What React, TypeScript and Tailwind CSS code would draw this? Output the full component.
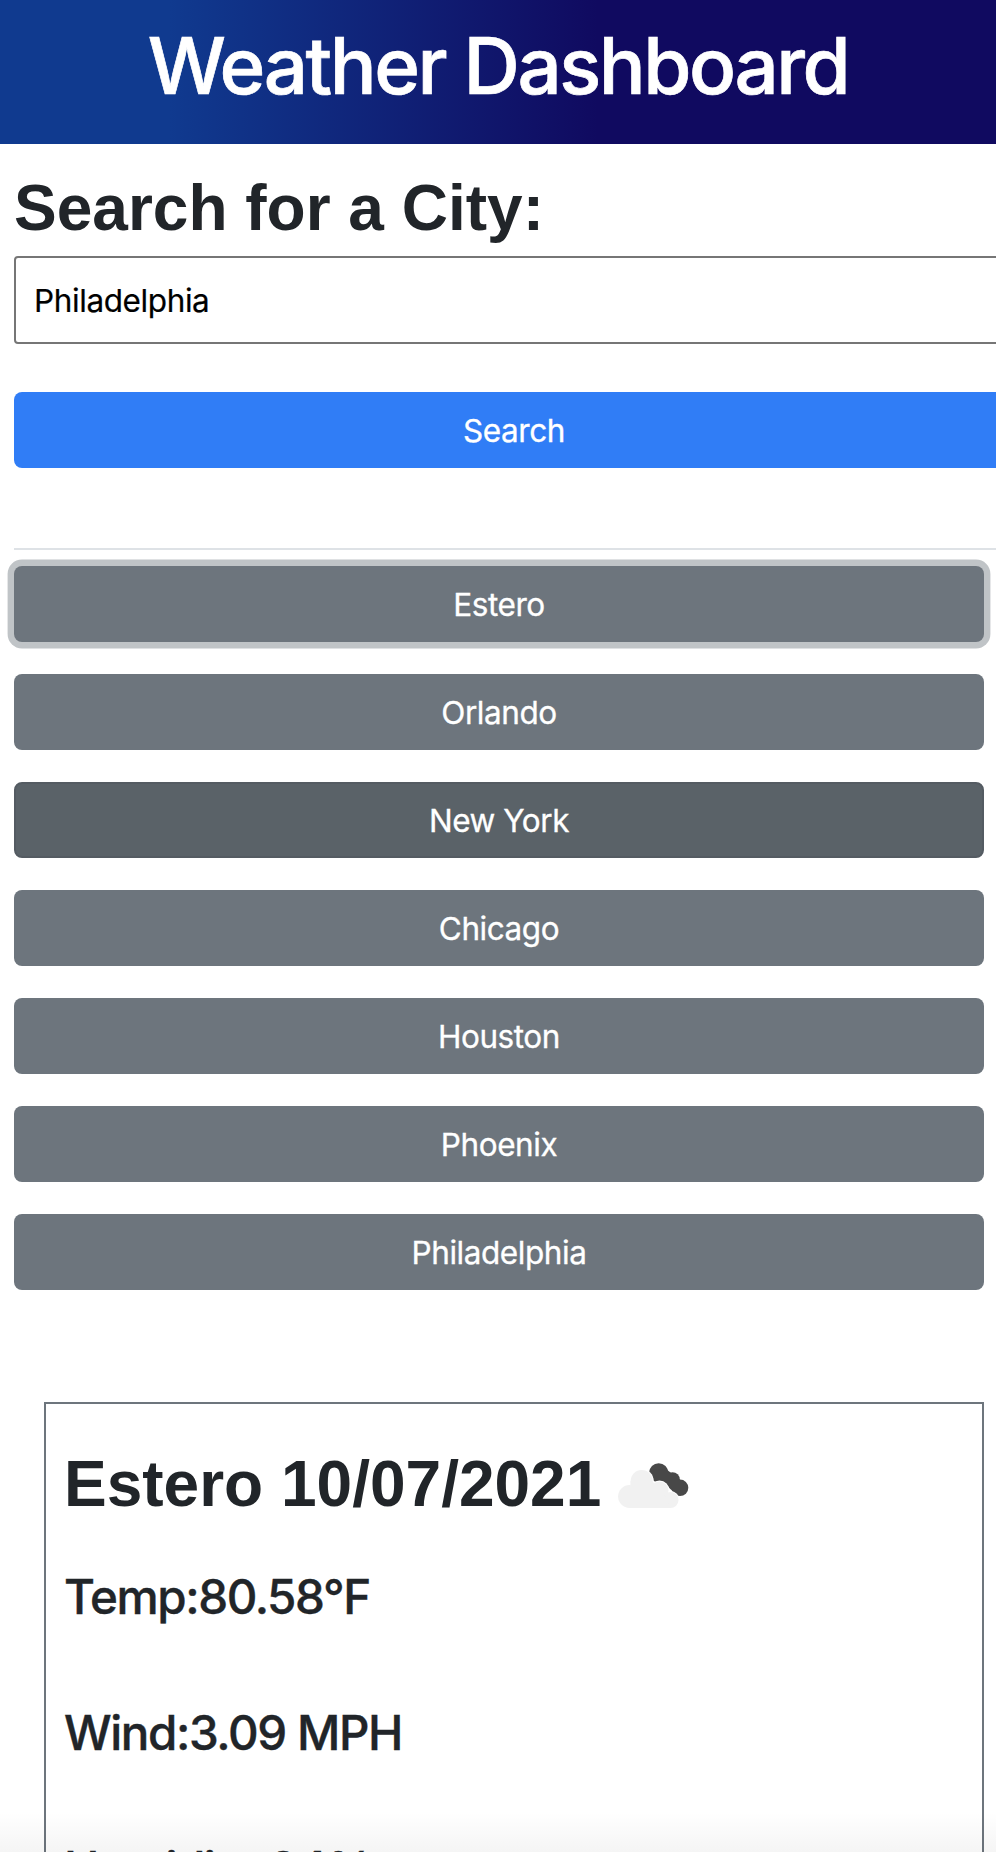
import React from "react";

const cities = ["Estero", "Orlando", "New York", "Chicago", "Houston", "Phoenix", "Philadelphia"];

const readings = ["Temp:80.58°F", "Wind:3.09 MPH", "Humidity:84%"];

function cityClass(city: string) {
  if (city === "Estero") return "bg-[#6d757d] ring-[6.4px] ring-[#c0c4c7]";
  if (city === "New York") return "border-2 border-[#545b62] bg-[#5a6268]";
  return "bg-[#6d757d]";
}

function BrokenClouds() {
  return (
    <svg className="mt-[59px] ml-[17px] h-[46px] w-[72px] shrink-0" viewBox="0 0 72 46" fill="none">
      <g fill="#484848">
        <circle cx="40.700" cy="9.800" r="9.600" />
        <circle cx="54.500" cy="16.500" r="7.300" />
        <circle cx="62" cy="24.800" r="8.300" />
        <path d="M31.500 7L60 33L66 20L48 6Z" />
      </g>
      <g fill="#fff">
        <circle cx="23.700" cy="18" r="12" />
        <circle cx="41.500" cy="27.500" r="10" />
        <circle cx="52.500" cy="37" r="9" />
      </g>
      <g fill="#f1f1f1">
        <circle cx="23.700" cy="18" r="11" />
        <circle cx="11.500" cy="33.500" r="11.400" />
        <circle cx="41.500" cy="27.500" r="9" />
        <circle cx="52.500" cy="37" r="8" />
        <path d="M12.500 18H34L46 30L52.500 45H11.500Z" />
      </g>
    </svg>
  );
}

export default function App() {
  return (
    <div className="relative h-[1852px] w-full overflow-hidden bg-white font-['Inter',sans-serif] text-[#212529]">
      <header className="flex h-36 justify-center bg-[linear-gradient(90deg,#103a8f_0%,#103a8f_17%,#100a60_60%,#100a60_100%)] text-white">
        <h1 className="mt-2 text-[78px] leading-[116px] font-medium tracking-[-2.450px] whitespace-nowrap [-webkit-text-stroke:0.7px_currentColor]">
          Weather Dashboard
        </h1>
      </header>

      <main className="pl-3.5">
        <section className="w-[1000px]">
          <h2 className="h-28 pt-[26px] font-['Liberation_Sans',sans-serif] text-[64px] leading-[77px] font-bold">
            Search for a City:
          </h2>
          <input
            className="block h-[88px] w-full rounded-[4px] border-2 border-[#767676] bg-white px-[18px] text-[31.500px] tracking-[-0.400px] text-black outline-none [-webkit-text-stroke:0.200px_currentColor]"
            defaultValue="Philadelphia"
          />
          <button className="mt-12 block h-[76px] w-full rounded-lg bg-[#307df6] pt-0.5 text-[31.500px] tracking-[-0.450px] text-white [-webkit-text-stroke:0.300px_currentColor]">
            Search
          </button>
          <hr className="mt-20 border-t-2 border-[#dee2e6]" />
        </section>

        <nav className="mt-4 flex w-[970px] flex-col gap-8">
          {cities.map((city) => (
            <button
              key={city}
              className={`flex h-[76px] items-center justify-center rounded-lg pt-0.5 text-[31.500px] tracking-[-0.450px] text-white [-webkit-text-stroke:0.300px_currentColor] ${cityClass(city)}`}
            >
              {city}
            </button>
          ))}
        </nav>

        <section className="mt-28 ml-[30px] h-[600px] w-[940px] border-2 border-[#6d757d] pl-[18px]">
          <div className="flex h-[164px]">
            <h2 className="pt-[42px] font-['Liberation_Sans',sans-serif] text-[64px] leading-[77px] font-bold whitespace-nowrap">
              Estero 10/07/2021
            </h2>
            <BrokenClouds />
          </div>
          {readings.map((reading) => (
            <h4
              key={reading}
              className="mb-[78px] h-[58px] text-[47.500px] leading-[58px] font-medium tracking-[-1.400px] last:tracking-[-1.550px] [-webkit-text-stroke:0.400px_currentColor]"
            >
              {reading}
            </h4>
          ))}
        </section>
      </main>
      <div className="pointer-events-none absolute inset-x-0 bottom-0 h-10 bg-linear-to-b from-transparent to-black/[0.04]" />
    </div>
  );
}
